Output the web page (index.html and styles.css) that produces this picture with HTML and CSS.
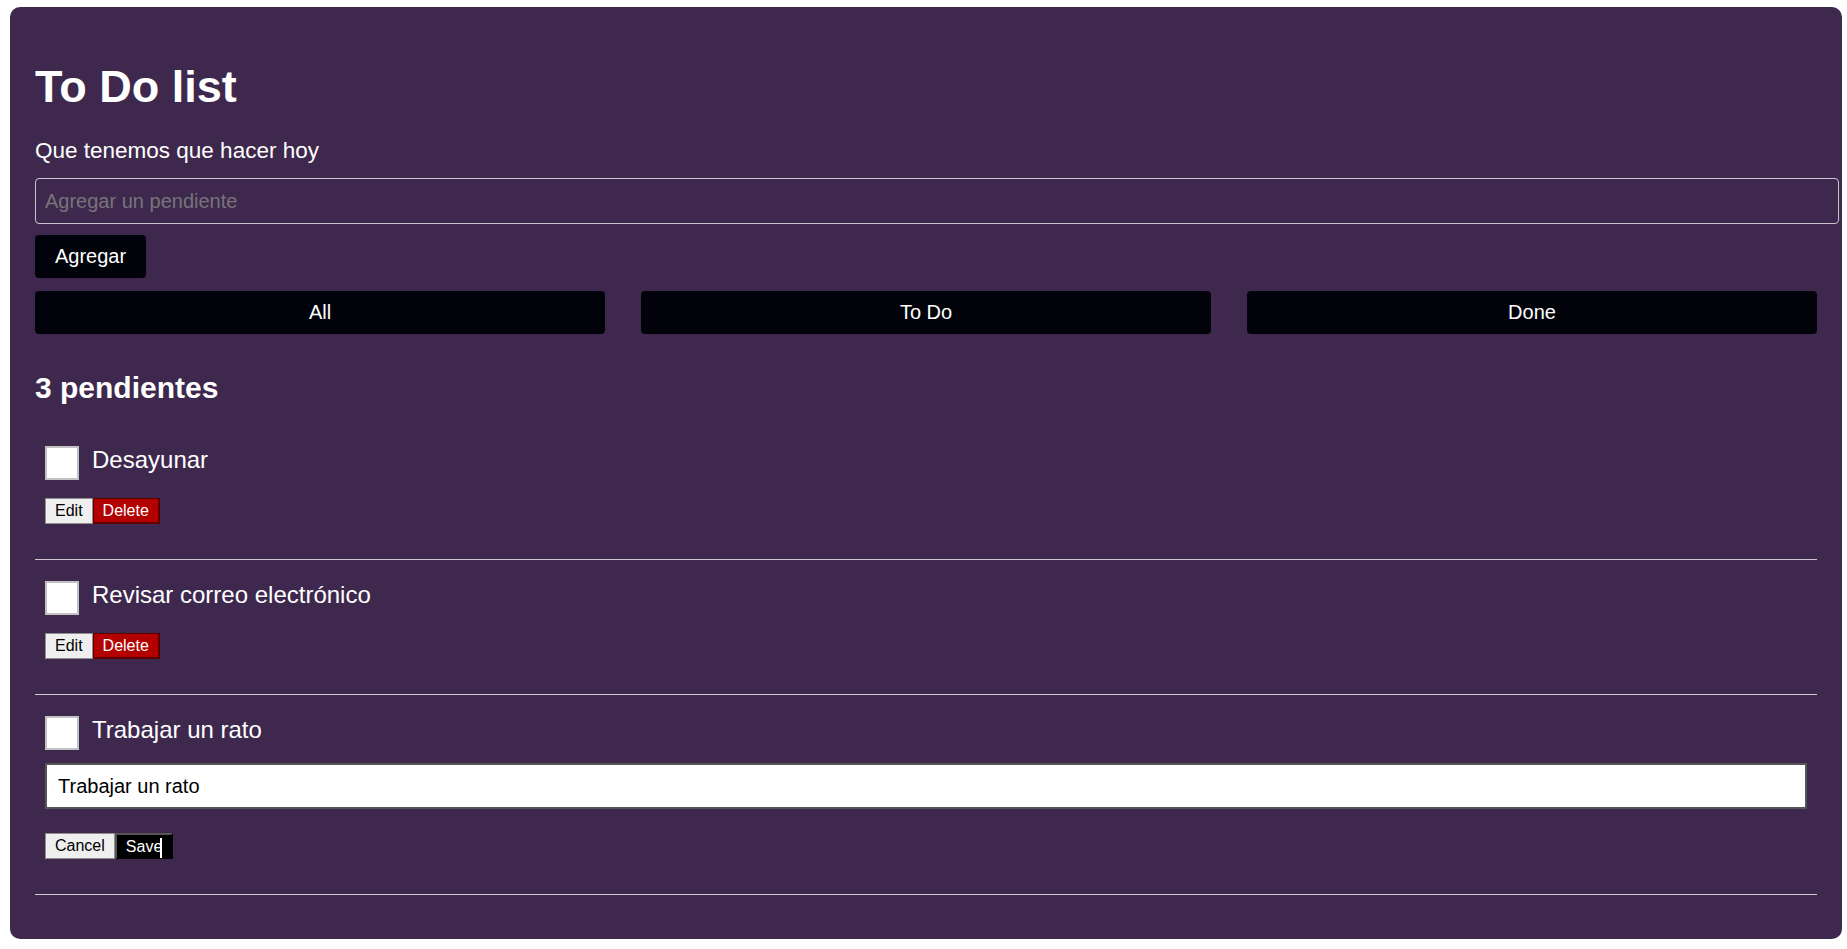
FILE: index.html
```html
<!DOCTYPE html>
<html lang="es">
<head>
<meta charset="utf-8">
<title>To Do list</title>
<link rel="stylesheet" href="styles.css">
</head>
<body>
<div class="app">
  <h1 class="title">To Do list</h1>
  <p class="subtitle">Que tenemos que hacer hoy</p>
  <form class="add-form">
    <input class="add-input" type="text" placeholder="Agregar un pendiente">
    <button type="button" class="add-btn">Agregar</button>
  </form>
  <div class="filters">
    <button type="button" class="filter-btn">All</button>
    <button type="button" class="filter-btn">To Do</button>
    <button type="button" class="filter-btn">Done</button>
  </div>
  <h2 class="count">3 pendientes</h2>
  <ul class="todo-list">
    <li class="todo">
      <div class="todo-row">
        <input type="checkbox" class="check">
        <span class="todo-label">Desayunar</span>
      </div>
      <div class="actions">
        <button type="button" class="btn btn-light">Edit</button><button type="button" class="btn btn-danger">Delete</button>
      </div>
    </li>
    <li class="todo">
      <div class="todo-row">
        <input type="checkbox" class="check">
        <span class="todo-label">Revisar correo electrónico</span>
      </div>
      <div class="actions">
        <button type="button" class="btn btn-light">Edit</button><button type="button" class="btn btn-danger">Delete</button>
      </div>
    </li>
    <li class="todo">
      <div class="todo-row">
        <input type="checkbox" class="check">
        <span class="todo-label">Trabajar un rato</span>
      </div>
      <input type="text" class="edit-input" value="Trabajar un rato">
      <div class="actions actions-edit">
        <button type="button" class="btn btn-light">Cancel</button><button type="button" class="btn btn-dark">Save<span class="cursor"></span></button>
      </div>
    </li>
  </ul>
</div>
</body>
</html>
```
FILE: styles.css
```css
* { box-sizing: border-box; }

html, body {
  background: #ffffff;
}

body {
  margin: 0;
  padding: 7px 5px 10px 10px;
  font-family: "Liberation Sans", Arial, sans-serif;
  color: #ffffff;
}

.app {
  background: #3e284d;
  border-radius: 10px;
  padding: 25px 25px 25px 25px;
  min-height: 932px;
}

.title {
  margin: 29px 0 0 0;
  font-size: 45px;
  font-weight: 700;
  line-height: 52px;
}

.subtitle {
  margin: 25px 0 0 0;
  font-size: 22.5px;
  line-height: 26px;
}

.add-form {
  display: flex;
  flex-direction: column;
  align-items: flex-start;
}

.add-input {
  margin-top: 14px;
  width: calc(100% + 22px);
  height: 46px;
  padding: 11px 9px;
  border: 1px solid #c9c4cc;
  border-radius: 4px;
  background: transparent;
  color: #ffffff;
  font-family: "Liberation Sans", Arial, sans-serif;
  font-size: 20px;
  line-height: 22px;
  outline: none;
}

.add-input::placeholder {
  color: #787479;
}

.add-btn {
  margin-top: 11px;
  height: 43px;
  padding: 0 20px;
  border: none;
  border-radius: 4px;
  background: #02030a;
  color: #ffffff;
  font-family: "Liberation Sans", Arial, sans-serif;
  font-size: 20px;
}

.filters {
  margin-top: 13px;
  display: grid;
  grid-template-columns: repeat(3, 1fr);
  column-gap: 36px;
}

.filter-btn {
  height: 43px;
  border: none;
  border-radius: 4px;
  background: #02030a;
  color: #ffffff;
  font-family: "Liberation Sans", Arial, sans-serif;
  font-size: 20px;
}

.count {
  margin: 36px 0 0 0;
  font-size: 30px;
  font-weight: 700;
  line-height: 35px;
}

.todo-list {
  list-style: none;
  margin: 20px 0 0 0;
  padding: 0;
}

.todo {
  padding: 21px 10px 35px 10px;
  border-bottom: 1px solid #cfc9d2;
}

.todo-row {
  display: flex;
  align-items: flex-start;
  gap: 13px;
}

.check {
  appearance: none;
  -webkit-appearance: none;
  margin: 0;
  width: 34px;
  height: 34px;
  border: 2px solid #c2c2c2;
  background: #ffffff;
  flex: none;
}

.todo-label {
  font-size: 24px;
  line-height: 28px;
}

.actions {
  margin-top: 18px;
  display: flex;
}

.actions-edit {
  margin-top: 24px;
}

.btn {
  position: relative;
  height: 26px;
  padding: 0 9px;
  border: 1px solid #767676;
  font-family: "Liberation Sans", Arial, sans-serif;
  font-size: 16px;
  line-height: 22px;
}

.btn-light {
  background: #efefef;
  color: #000000;
  border-color: #8f8f8f;
}

.btn-danger {
  background: #b30000;
  color: #ffffff;
  border-color: #5c0000;
  border-width: 1px 2px 2px 1px;
}

.btn-dark {
  background: #000000;
  color: #ffffff;
  border-color: #555555 #000000 #000000 #555555;
  border-width: 2px 2px 1px 2px;
}

.cursor {
  position: absolute;
  left: 43px;
  top: 3px;
  width: 2px;
  height: 20px;
  background: #ffffff;
}

.edit-input {
  display: block;
  margin-top: 13px;
  width: 100%;
  height: 46px;
  padding: 10px 11px;
  border: 2px solid #555555;
  background: #ffffff;
  color: #000000;
  font-family: "Liberation Sans", Arial, sans-serif;
  font-size: 20px;
  line-height: 22px;
  outline: none;
}
```
